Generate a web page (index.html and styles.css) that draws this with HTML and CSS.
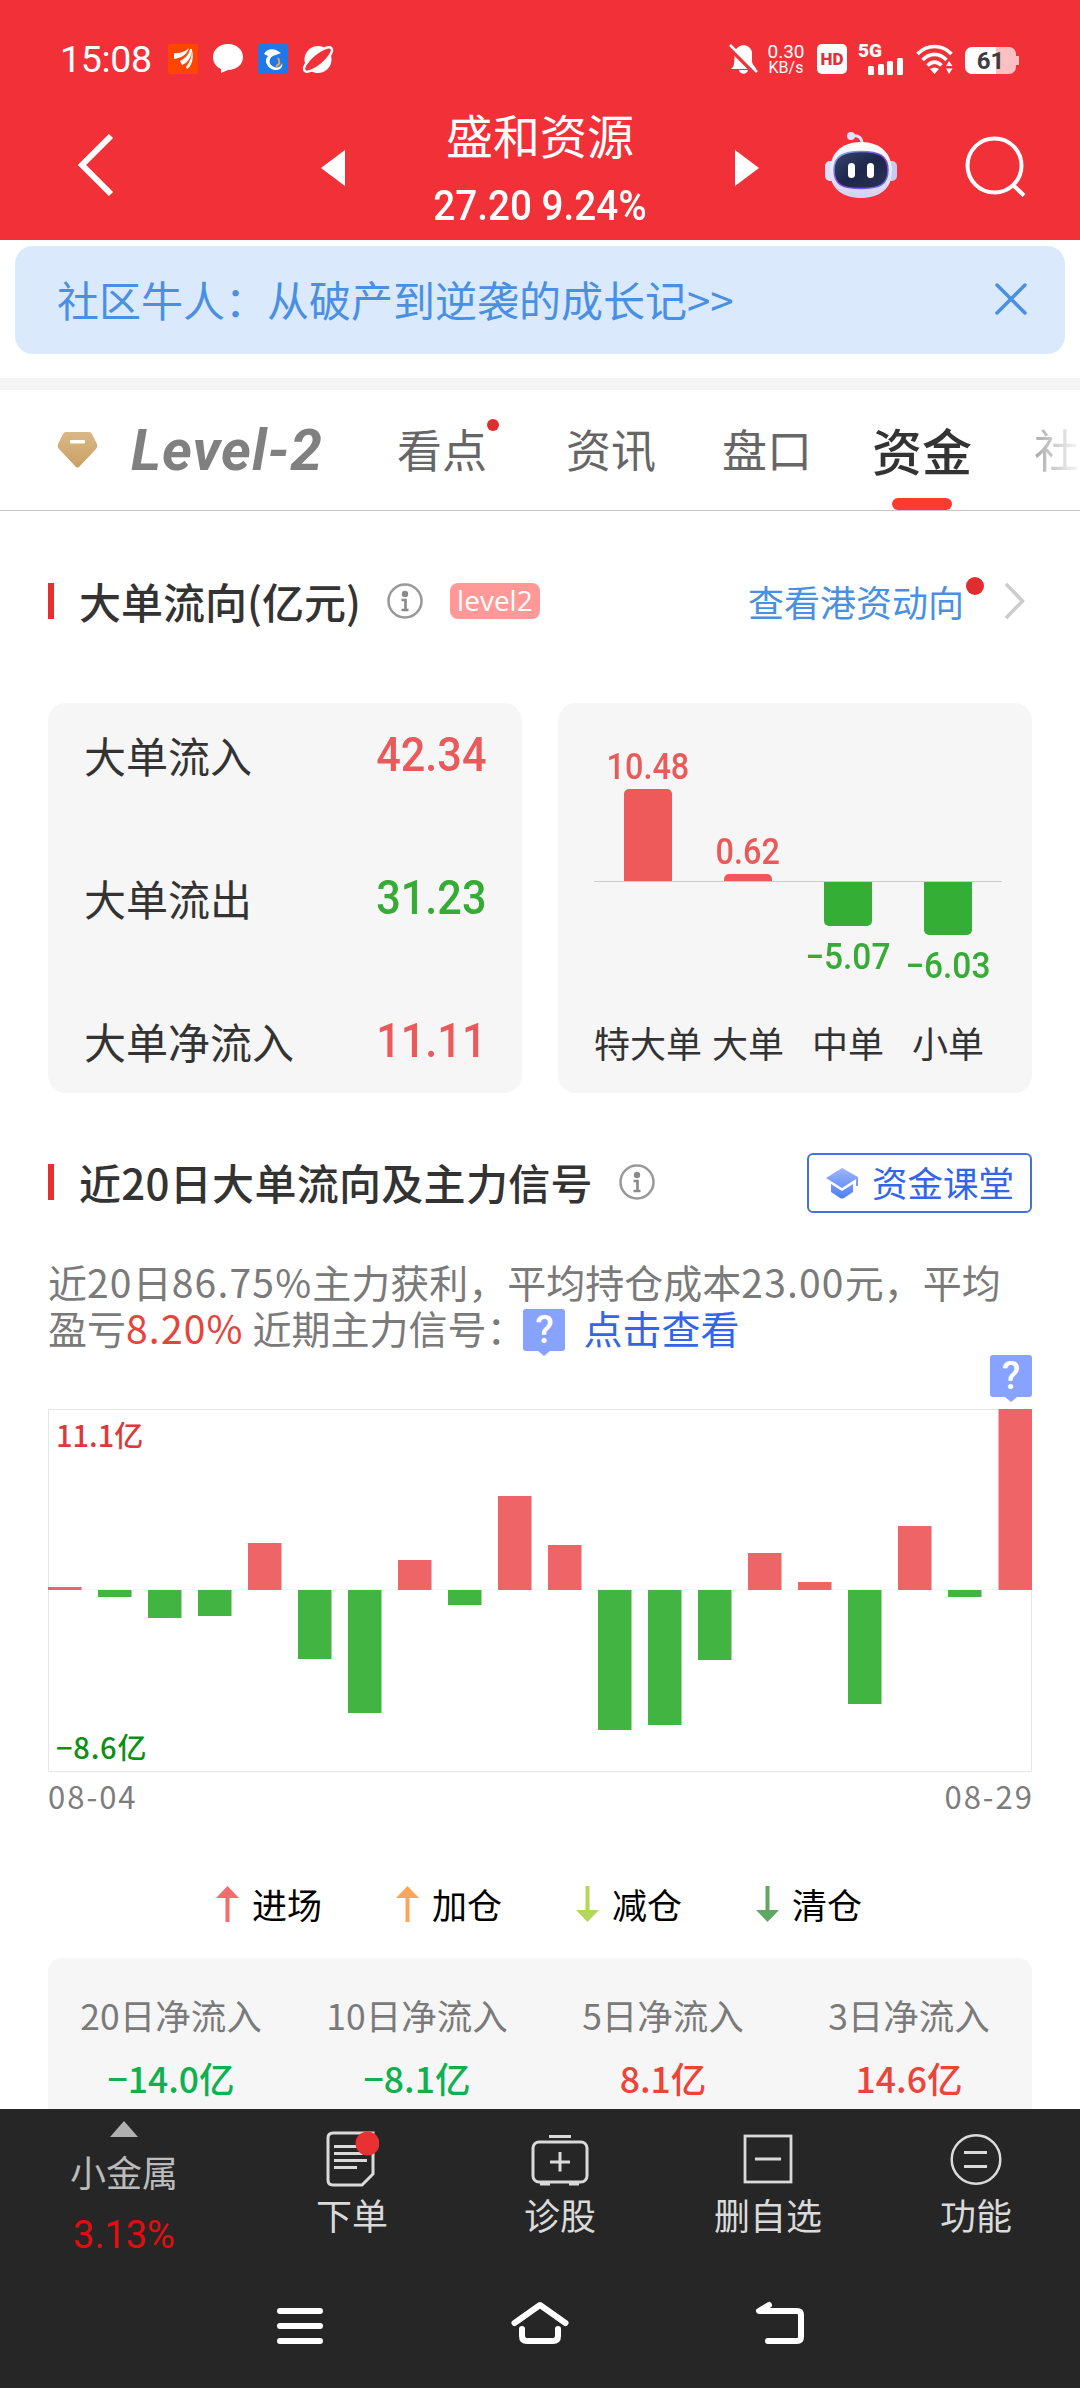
FILE: index.html
```
<!DOCTYPE html>
<html lang="zh-CN">
  <head>
    <meta charset="UTF-8">
    <meta name="viewport" content="width=device-width, initial-scale=1.0">
    <title>盛和资源</title>
    <link rel="stylesheet" href="styles.css">
  </head>
  <body>
    <header class="header">
      <div class="status">
        <span class="clock">15:08</span>
        <svg class="status-left" width="168" height="32" viewBox="0 0 168 32">
          <rect x="1" y="1" width="30" height="30" rx="2" fill="#ff4500"/>
          <path d="M7 10C13 11 19 8 22 5C20 12 14 15 7 16ZM13 18C19 15 22 11 23 6L25 6C25 13 21 20 15 22ZM19 24C23 19 25 13 25 7C27 15 25 23 20 26Z" fill="#fff"/>
          <path d="M61 1C70 1 76 7 76 14C76 22 69 27 61 27L54 30L54 26C49 24 46 19 46 14C46 7 52 1 61 1Z" fill="#fff"/>
          <rect x="91" y="1" width="30" height="30" rx="2" fill="#1f77e8"/>
          <path d="M97 11C99 7 104 5 109 7L114 10L109 12C103 13 101 18 104 22C108 26 114 25 115 20C117 27 108 29 103 25C98 21 98 16 101 13Z" fill="#fff"/>
          <path d="M109 23C113 22 113 18 111 15" stroke="#f6a33a" stroke-width="2" fill="none"/>
          <circle cx="151" cy="16.500" r="13.500" fill="#fff"/>
          <ellipse cx="151" cy="16.500" rx="17.500" ry="6" transform="rotate(-40 151 16.500)" fill="#f23038" stroke="#fff" stroke-width="2.500"/>
        </svg>
        <div class="status-right">
          <svg width="30" height="32" viewBox="0 0 30 32">
            <path d="M5 24C7 21 6 12 7 9C9 0 22 0 24 9L24 18C24 22 28 24 28 26L3 26ZM11 27H20C19 32 12 32 11 27Z" fill="#fff"/>
            <path d="M0 3L28 31" stroke="#f23038" stroke-width="5"/>
            <path d="M2 2L29 29" stroke="#fff" stroke-width="2.5"/>
          </svg>
          <div class="speed"><span>0.30</span><span class="unit">KB/s</span></div>
          <span class="hd">HD</span>
          <div class="signal">
            <span>5G</span>
            <svg width="36" height="17" viewBox="0 0 36 17">
              <g fill="#fff"><rect x="0" y="8" width="6" height="9" rx="1.5"/><rect x="10" y="6" width="6" height="11" rx="1.5"/><rect x="19" y="3" width="6" height="14" rx="1.5"/><rect x="29" y="0" width="6" height="17" rx="1.5"/></g>
            </svg>
          </div>
          <svg class="wifi" width="38" height="31" viewBox="0 0 38 31">
            <g fill="none" stroke="#fff" stroke-width="3.6"><path d="M1.500 10C11 0 26 0 35.500 10"/><path d="M6.500 16C14 8.500 23 8.500 30.500 16"/><path d="M11.500 21.500C16 17 21 17 25.500 21.500"/></g>
            <path d="M14 25Q18.500 22 23 25L18.500 30Z" fill="#fff"/>
            <path d="M30 22L33 17L36.500 22ZM30 24.500H36.500L33 30Z" fill="#fff"/>
          </svg>
          <div class="battery"><span>61</span></div>
        </div>
      </div>
      <div class="titlebar">
        <svg class="back" width="40" height="66" viewBox="0 0 40 66"><path d="M36 4L7 33L36 62" fill="none" stroke="#fff" stroke-width="6"/></svg>
        <svg class="prev" width="24" height="36" viewBox="0 0 24 36"><path d="M24 0V36L0 18Z" fill="#fff"/></svg>
        <div class="stock">
          <h1>盛和资源</h1>
          <span class="din">27.20 9.24%</span>
        </div>
        <svg class="next" width="24" height="36" viewBox="0 0 24 36"><path d="M0 0V36L24 18Z" fill="#fff"/></svg>
        <svg class="robot" width="72" height="68" viewBox="0 0 72 68">
          <defs>
            <linearGradient id="shell" x1="0" y1="0" x2="0" y2="1"><stop offset="0" stop-color="#fff"/><stop offset="1" stop-color="#d3d0f6"/></linearGradient>
            <linearGradient id="face" x1="0" y1="0" x2="1" y2="1"><stop offset="0" stop-color="#39456b"/><stop offset=".5" stop-color="#1d264b"/><stop offset="1" stop-color="#2b3153"/></linearGradient>
            <linearGradient id="rim" x1="0" y1="0" x2="1" y2="1"><stop offset="0" stop-color="#7bc4ef"/><stop offset=".5" stop-color="#7a3fd8"/><stop offset="1" stop-color="#6a6fe8"/></linearGradient>
          </defs>
          <path d="M27 5C34 4 37 7 37 13" fill="none" stroke="#e4e1f8" stroke-width="3"/>
          <circle cx="26" cy="5" r="4" fill="#e4e1f8"/>
          <rect x="0" y="30" width="12" height="20" rx="5" fill="#e0defa"/>
          <rect x="60" y="30" width="12" height="20" rx="5" fill="#c9c9f2"/>
          <path d="M36 11C56 11 67 23 67 40C67 58 54 67 36 67C18 67 5 58 5 40C5 23 16 11 36 11Z" fill="url(#shell)"/>
          <path d="M36 20.500C54 20.500 63 25 63 39C63 54 54 57.500 36 57.500C18 57.500 9 54 9 39C9 25 18 20.500 36 20.500Z" fill="url(#face)" stroke="url(#rim)" stroke-width="1.500"/>
          <rect x="23" y="32" width="7" height="15" rx="3.500" fill="#fff"/>
          <rect x="42" y="32" width="7" height="15" rx="3.500" fill="#fff"/>
        </svg>
        <svg class="search" width="62" height="62" viewBox="0 0 62 62"><g fill="none" stroke="#fff" stroke-width="4"><circle cx="29.500" cy="29.500" r="27"/><path d="M48 49L59 59.500"/></g></svg>
      </div>
    </header>

    <div class="banner">
      <span>社区牛人：从破产到逆袭的成长记&gt;&gt;</span>
      <svg width="32" height="32" viewBox="0 0 32 32"><path d="M2 2L30 30M30 2L2 30" stroke="#4a90e2" stroke-width="3.500" stroke-linecap="round"/></svg>
    </div>

    <nav class="tabs">
      <svg class="diamond" width="41" height="36" viewBox="0 0 41 36">
        <defs><linearGradient id="gold" x1="0" y1="0" x2="0" y2="1"><stop offset="0" stop-color="#d9b886"/><stop offset="1" stop-color="#caa066"/></linearGradient></defs>
        <path d="M9 0H32Q34 0 35 2L40 12Q41 15 39 17L22 35Q20.500 36 19 35L2 17Q0 15 1 12L6 2Q7 0 9 0Z" fill="url(#gold)"/>
        <rect x="13" y="8" width="15" height="3.500" rx="1" fill="#fff"/>
      </svg>
      <span class="level">Level-2</span>
      <a class="tab dot">看点</a>
      <a class="tab">资讯</a>
      <a class="tab">盘口</a>
      <a class="tab active">资金</a>
      <a class="tab fade">社</a>
    </nav>

    <main class="content">
      <section>
        <div class="heading">
          <h2>大单流向(亿元)</h2>
          <svg class="info" width="36" height="36" viewBox="0 0 36 36"><circle cx="18" cy="18" r="16.500" fill="none" stroke="#999" stroke-width="2.500"/><circle cx="18" cy="11" r="3.200" fill="#8a8a8a"/><path d="M14.500 17H18.500V27M14.500 27H21.500" fill="none" stroke="#8a8a8a" stroke-width="2.600"/></svg>
          <span class="badge">level2</span>
          <a class="hk-link">查看港资动向</a>
          <svg class="more" width="22" height="38" viewBox="0 0 22 38"><path d="M2 2L18.500 19L2 36" fill="none" stroke="#ccc" stroke-width="3.500"/></svg>
        </div>

        <div class="cards">
          <div class="card flow">
            <div class="row"><span>大单流入</span><b class="din up">42.34</b></div>
            <div class="row"><span>大单流出</span><b class="din down">31.23</b></div>
            <div class="row"><span>大单净流入</span><b class="din up">11.11</b></div>
          </div>
          <div class="card orders">
            <div class="zone above">
              <div class="order"><b class="din up">10.48</b><i style="height:92px"></i></div>
              <div class="order"><b class="din up">0.62</b><i style="height:7px"></i></div>
            </div>
            <div class="zone below">
              <div class="order"></div>
              <div class="order"></div>
              <div class="order"><i style="height:44px"></i><b class="din down">−5.07</b></div>
              <div class="order"><i style="height:53px"></i><b class="din down">−6.03</b></div>
            </div>
            <div class="names"><span>特大单</span><span>大单</span><span>中单</span><span>小单</span></div>
          </div>
        </div>
      </section>

      <section class="signal20">
        <div class="heading">
          <h2>近20日大单流向及主力信号</h2>
          <svg class="info" width="36" height="36" viewBox="0 0 36 36"><circle cx="18" cy="18" r="16.500" fill="none" stroke="#999" stroke-width="2.500"/><circle cx="18" cy="11" r="3.200" fill="#8a8a8a"/><path d="M14.500 17H18.500V27M14.500 27H21.500" fill="none" stroke="#8a8a8a" stroke-width="2.600"/></svg>
          <a class="lesson">
            <svg width="34" height="32" viewBox="0 0 34 32">
              <defs><linearGradient id="cap" x1="0" y1="0" x2="0" y2="1"><stop offset="0" stop-color="#9db6fc"/><stop offset="1" stop-color="#4f7ef8"/></linearGradient></defs>
              <path d="M17 1L33 10V19H31V12L17 21L1 11ZM6 17L17 24L28 17V25L19 31Q17 32 15 31L6 25Z" fill="url(#cap)"/>
            </svg>
            <span>资金课堂</span>
          </a>
        </div>

        <p class="summary">近<span class="num">20</span>日<span class="num">86.75%</span>主力获利，平均持仓成本<span class="num">23.00</span>元，平均<br>盈亏<em class="num">8.20%</em> 近期主力信号：<span class="mark">?</span><a>点击查看</a></p>

        <div class="chart">
          <span class="mark last">?</span>
          <span class="max">11.1亿</span>
          <span class="min">−8.6亿</span>
          <svg width="984" height="363" viewBox="0 0 984 363">
            <rect x=".5" y=".5" width="983" height="362" fill="none" stroke="#e6e6e6"/>
            <path d="M0 180.500H984" stroke="#f6f6f6"/>
            <g fill="#ef6567">
              <rect x="0" y="178" width="33.500" height="3"/>
              <rect x="200" y="134" width="33.500" height="47"/>
              <rect x="350" y="151" width="33.500" height="30"/>
              <rect x="450" y="87" width="33.500" height="94"/>
              <rect x="500" y="136" width="33.500" height="45"/>
              <rect x="700" y="144" width="33.500" height="37"/>
              <rect x="750" y="173" width="33.500" height="8"/>
              <rect x="850" y="117" width="33.500" height="64"/>
              <rect x="950.500" y="0" width="33.500" height="181"/>
            </g>
            <g fill="#42b442">
              <rect x="50" y="181" width="33.500" height="7"/>
              <rect x="100" y="181" width="33.500" height="28"/>
              <rect x="150" y="181" width="33.500" height="26"/>
              <rect x="250" y="181" width="33.500" height="69"/>
              <rect x="300" y="181" width="33.500" height="123"/>
              <rect x="400" y="181" width="33.500" height="15"/>
              <rect x="550" y="181" width="33.500" height="140"/>
              <rect x="600" y="181" width="33.500" height="135"/>
              <rect x="650" y="181" width="33.500" height="70"/>
              <rect x="800" y="181" width="33.500" height="114"/>
              <rect x="900" y="181" width="33.500" height="7"/>
            </g>
          </svg>
        </div>
        <div class="dates"><span>08-04</span><span>08-29</span></div>

        <div class="legend">
          <span><svg width="23" height="36" viewBox="0 0 23 36"><path d="M11.500 0L23 12H13.500V36H9.500V12H0Z" fill="#f26d6c"/></svg>进场</span>
          <span><svg width="23" height="36" viewBox="0 0 23 36"><path d="M11.500 0L23 12H13.500V36H9.500V12H0Z" fill="#fba55c"/></svg>加仓</span>
          <span><svg width="23" height="36" viewBox="0 0 23 36"><path d="M11.500 36L23 24H13.500V0H9.500V24H0Z" fill="#b2d75c"/></svg>减仓</span>
          <span><svg width="23" height="36" viewBox="0 0 23 36"><path d="M11.500 36L23 24H13.500V0H9.500V24H0Z" fill="#5fa862"/></svg>清仓</span>
        </div>

        <div class="totals">
          <div><span>20日净流入</span><b class="out">−14.0亿</b></div>
          <div><span>10日净流入</span><b class="out">−8.1亿</b></div>
          <div><span>5日净流入</span><b class="in">8.1亿</b></div>
          <div><span>3日净流入</span><b class="in">14.6亿</b></div>
        </div>
      </section>
    </main>

    <footer class="footer">
      <div class="menu">
        <a class="sector">
          <svg width="28" height="16" viewBox="0 0 28 16"><path d="M14 0L28 16H0Z" fill="#b0b0b0"/></svg>
          <span>小金属</span>
          <b>3.13%</b>
        </a>
        <a class="item">
          <svg width="54" height="60" viewBox="0 0 54 60">
            <path d="M8 4H48V45L37 56H8Q3 56 3 51V9Q3 4 8 4Z" fill="none" stroke="#dadada" stroke-width="3"/>
            <path d="M9 17.500H35M9 24.500H38M9 31.500H42M9 38.500H32" stroke="#dadada" stroke-width="3"/>
            <circle cx="42.500" cy="14.500" r="12" fill="#e93134"/>
          </svg>
          <span>下单</span>
        </a>
        <a class="item">
          <svg width="60" height="60" viewBox="0 0 60 60">
            <rect x="3" y="13" width="54" height="40" rx="6" fill="none" stroke="#dadada" stroke-width="3"/>
            <path d="M19 7.500H41M30 23V42.500M20 33H40" stroke="#dadada" stroke-width="3"/>
            <path d="M10 54.500H20M39 54.500H49" stroke="#dadada" stroke-width="4"/>
          </svg>
          <span>诊股</span>
        </a>
        <a class="item">
          <svg width="50" height="60" viewBox="0 0 50 60">
            <rect x="2" y="7" width="46" height="46" fill="none" stroke="#dadada" stroke-width="2.800"/>
            <path d="M12 30H38" stroke="#dadada" stroke-width="3"/>
          </svg>
          <span>删自选</span>
        </a>
        <a class="item">
          <svg width="52" height="60" viewBox="0 0 52 60">
            <circle cx="26" cy="30.500" r="24.300" fill="none" stroke="#dadada" stroke-width="2.500"/>
            <path d="M14 23.500H37M14 37.500H37" stroke="#dadada" stroke-width="3"/>
          </svg>
          <span>功能</span>
        </a>
      </div>
      <div class="system">
        <svg width="60" height="46" viewBox="0 0 60 46"><path d="M10 10H50M10 25H50M10 40H50" stroke="#fff" stroke-width="6" stroke-linecap="round"/></svg>
        <svg width="60" height="46" viewBox="0 0 60 46"><path d="M4.500 22L30 4L55.500 22M12 28V35Q12 40 17 40H43Q48 40 48 35V28" fill="none" stroke="#fff" stroke-width="6" stroke-linecap="round" stroke-linejoin="round"/></svg>
        <svg width="60" height="46" viewBox="0 0 60 46"><path d="M19 4L9 10H47Q51 10 51 14V36Q51 40 47 40H18" fill="none" stroke="#fff" stroke-width="6" stroke-linecap="round" stroke-linejoin="round"/></svg>
      </div>
    </footer>
  </body>
</html>
```
FILE: styles.css
```
* {
  box-sizing: border-box;
}
body {
  margin: 0;
  width: 1080px;
  height: 2388px;
  overflow: hidden;
  display: flex;
  flex-direction: column;
  background: #fff;
  color: #333;
  font-family: "Noto Sans CJK SC", sans-serif;
}
svg {
  display: block;
  flex: none;
}
h1, h2, p {
  margin: 0;
}
b, em, i {
  font-style: normal;
  font-weight: 500;
}

/* narrow figures */
.din {
  display: inline-block;
  font-family: Roboto, sans-serif;
  font-weight: 500;
  white-space: nowrap;
  transform: scaleX(.9);
}
.up {
  color: #eb5a5a;
}
.down {
  color: #36ab36;
}

/* header */
.header {
  flex: none;
  height: 240px;
  background: #f23038;
  color: #fff;
}
.status {
  height: 118px;
  padding-left: 60px;
  display: flex;
  align-items: center;
}
.clock {
  width: 107px;
  font: 37.500px/40px Roboto, sans-serif;
  letter-spacing: -.3px;
}
.status-right {
  flex: 1;
  display: flex;
  align-items: center;
  padding-left: 393px;
}
.speed {
  width: 38px;
  margin-left: 9px;
  font: 19px/17px Roboto, sans-serif;
  text-align: center;
}
.speed span {
  display: block;
}
.speed .unit {
  font-size: 16px;
  line-height: 15px;
}
.hd {
  width: 30px;
  height: 30px;
  margin-left: 12px;
  border-radius: 5px;
  background: #fff;
  color: #d8353b;
  font: 900 17px/31px Roboto, sans-serif;
  text-align: center;
}
.signal {
  width: 46px;
  margin-left: 11px;
  font: 900 19px/14px Roboto, sans-serif;
}
.signal span {
  display: block;
}
.signal svg {
  margin-left: 10px;
}
.wifi {
  margin-left: 12px;
}
.battery {
  position: relative;
  width: 51px;
  height: 27px;
  margin: 3px 0 0 11px;
  border-radius: 7px;
  background: linear-gradient(90deg, #fff 61%, #fcc0c3 61%);
  color: #3d3d3d;
  font: 700 24px/28px Roboto, sans-serif;
  text-align: center;
}
.battery::after {
  content: "";
  position: absolute;
  left: 51px;
  top: 9px;
  width: 3px;
  height: 9px;
  background: #fcc0c3;
}
.titlebar {
  height: 122px;
  display: flex;
  align-items: flex-start;
}
.back {
  margin: 14px 0 0 75px;
}
.prev {
  margin: 32px 0 0 206px;
}
.stock {
  width: 390px;
  text-align: center;
}
.stock h1 {
  font-size: 47px;
  font-weight: 400;
  line-height: 56px;
  margin-top: -12px;
}
.stock .din {
  display: block;
  font-size: 42.500px;
  line-height: 50px;
  margin-top: 19px;
  transform: scaleX(.91);
}
.next {
  margin-top: 32px;
}
.robot {
  margin: 13px 0 0 66px;
}
.search {
  margin: 18px 0 0 68px;
}

/* banner */
.banner {
  flex: none;
  height: 108px;
  margin: 6px 15px 24px;
  padding: 0 38px 2px 42px;
  display: flex;
  align-items: center;
  justify-content: space-between;
  border-radius: 18px;
  background: #dae9fc;
  color: #4a90e2;
  font-size: 42px;
  line-height: 60px;
}

/* tabs */
.tabs {
  flex: none;
  height: 133px;
  border-top: 12px solid #f4f4f4;
  border-bottom: 1px solid #c6c6c6;
  display: flex;
  overflow: hidden;
}
.diamond {
  margin: 42px 0 0 57px;
}
.level {
  flex: none;
  width: 264px;
  margin-left: 33px;
  color: #808080;
  font: italic 700 57px/121px Roboto, sans-serif;
  letter-spacing: 1px;
}
.tab {
  position: relative;
  flex: none;
  width: 162px;
  color: #666;
  font-size: 45px;
  line-height: 118px;
}
.tab:nth-of-type(2) {
  width: 156px;
}
.tab:nth-of-type(3) {
  width: 150px;
}
.tab.dot {
  margin-left: 2px;
  width: 169px;
}
.tab.dot::after {
  content: "";
  position: absolute;
  left: 90px;
  top: 29px;
  width: 12px;
  height: 12px;
  border-radius: 50%;
  background: #e02d2f;
}
.tab.active {
  color: #333;
  font-size: 50px;
  font-weight: 500;
}
.tab.active::after {
  content: "";
  position: absolute;
  left: 20px;
  bottom: 0;
  width: 60px;
  height: 12px;
  border-radius: 6px;
  background: #fb3b32;
}
.tab.fade {
  width: 46px;
  color: transparent;
  background: linear-gradient(90deg, #aaa, #f6f6f6 44px);
  -webkit-background-clip: text;
  background-clip: text;
}

/* sections */
.content {
  flex: 1;
  min-height: 0;
  overflow: hidden;
  padding: 61px 48px 0;
}
.heading {
  height: 60px;
  display: flex;
  align-items: center;
}
.heading::before {
  content: "";
  width: 6px;
  height: 36px;
  background: #e62f30;
}
.heading h2 {
  margin: -3px 0 0 25px;
  font-size: 42px;
  font-weight: 500;
  line-height: 60px;
  white-space: nowrap;
}
.info {
  margin: -3px 0 0 26px;
}
.badge {
  width: 90px;
  height: 36px;
  margin: -3px 0 0 27px;
  border-radius: 8px;
  background: #ff9896;
  color: #fff;
  font: 28px/35px "Open Sans", sans-serif;
  text-align: center;
}
.heading::before, .more {
  margin-top: -3px;
}
.hk-link {
  position: relative;
  margin: -3px 0 0 auto;
  color: #4a90e2;
  font-size: 36px;
}
.hk-link::after {
  content: "";
  position: absolute;
  right: -20px;
  top: 2px;
  width: 18px;
  height: 18px;
  border-radius: 50%;
  background: #e02d2f;
}
.more {
  margin-left: 40px;
  margin-right: 6px;
}
.cards {
  display: grid;
  grid-template-columns: 474px 474px;
  gap: 36px;
  margin-top: 71px;
}
.card {
  height: 390px;
  border-radius: 18px;
  background: #f6f6f6;
}
.flow {
  padding: 22px 36px;
  display: flex;
  flex-direction: column;
  justify-content: space-between;
}
.row {
  display: flex;
  justify-content: space-between;
  font-size: 42px;
  line-height: 60px;
}
.row .din {
  font-size: 48px;
  transform-origin: right;
}
.orders {
  padding: 0 30px 0 36px;
}
.zone {
  height: 178px;
  display: flex;
  align-items: flex-end;
  padding-left: 4px;
}
.below {
  height: 140px;
  align-items: flex-start;
  border-top: 1px solid #ccc;
}
.order {
  width: 100px;
  display: flex;
  flex-direction: column;
  align-items: center;
}
.order .din {
  font-size: 36px;
  line-height: 38px;
  margin: 3px 0;
}
.order i {
  width: 48px;
  border-radius: 5px 5px 0 0;
  background: #ee595a;
}
.below i {
  border-radius: 0 0 5px 5px;
  background: #35ae35;
}
.below .din {
  margin-top: 12px;
  transform: scaleX(.93);
}
.names {
  display: grid;
  grid-template-columns: repeat(4, 100px);
  justify-items: center;
  padding-left: 4px;
  font-size: 36px;
  line-height: 42px;
  white-space: nowrap;
}

.signal20 .heading {
  margin-top: 60px;
}
.signal20 h2 {
  letter-spacing: .3px;
}
.lesson {
  width: 225px;
  height: 60px;
  margin-left: auto;
  padding-left: 16px;
  display: flex;
  align-items: center;
  gap: 13px;
  border: 2px solid #4372de;
  border-radius: 6px;
  color: #3465e8;
  font-size: 35.500px;
}
.lesson span {
  margin-top: -4px;
}
.summary {
  height: 92px;
  margin-top: 45px;
  color: #7a7a7a;
  font-size: 39px;
  line-height: 46px;
  white-space: nowrap;
}
.summary em {
  color: #e8433a;
  font-weight: 400;
}
.summary a {
  color: #3465e8;
}
.num {
  letter-spacing: 1.200px;
}
.mark {
  position: relative;
  display: inline-block;
  width: 42px;
  height: 42px;
  margin: 0 18px 0 -2px;
  border-radius: 3px;
  background: #87a2ff;
  color: #fff;
  font: 500 38px/42px Roboto, sans-serif;
  text-align: center;
  vertical-align: 1px;
}
.mark::after {
  content: "";
  position: absolute;
  left: 15px;
  top: 42px;
  border: 6px solid transparent;
  border-top: 5px solid #87a2ff;
  border-bottom: 0;
}
.chart {
  position: relative;
  height: 363px;
  margin-top: 59px;
}
.mark.last {
  position: absolute;
  right: 0;
  top: -54px;
  margin: 0;
}
.max, .min {
  position: absolute;
  left: 8px;
  top: 10px;
  color: #d93a3a;
  font-size: 29px;
  font-weight: 500;
  line-height: 30px;
}
.min {
  top: auto;
  left: 8px;
  bottom: 11px;
  color: #0c8f12;
  letter-spacing: .8px;
}
.dates {
  display: flex;
  justify-content: space-between;
  margin-top: 4px;
  margin-right: -2px;
  color: #7d7d7d;
  font-size: 31px;
  line-height: 40px;
  letter-spacing: 2px;
}
.legend {
  display: grid;
  grid-template-columns: repeat(4, 180px);
  margin: 66px 0 0 168px;
  color: #000;
  font-size: 35px;
  line-height: 44px;
}
.legend span {
  display: flex;
  align-items: center;
  gap: 13px;
}
.totals {
  height: 200px;
  margin-top: 32px;
  padding-top: 32px;
  display: grid;
  grid-template-columns: repeat(4, 1fr);
  border-radius: 14px;
  background: #f6f6f6;
  text-align: center;
}
.totals span, .totals b {
  display: block;
  color: #7a7a7a;
  font-size: 35.500px;
  line-height: 50px;
}
.totals b {
  margin-top: 13px;
  font-weight: 500;
}
.totals .out {
  color: #0eb050;
}
.totals .in {
  color: #ee4338;
}

/* footer */
.footer {
  flex: none;
  height: 279px;
  background: #262626;
  color: #dadada;
  font-size: 36px;
}
.menu {
  height: 180px;
  display: grid;
  grid-template-columns: 248px repeat(4, 208px);
}
.menu a {
  display: flex;
  flex-direction: column;
  align-items: center;
}
.sector {
  padding-top: 12px;
  color: #bbb;
}
.sector span {
  line-height: 50px;
  margin-top: 9px;
}
.sector b {
  margin-top: 17px;
  color: #e00f0f;
  font: 38px/44px Roboto, sans-serif;
}
.item {
  padding-top: 20px;
}
.item span {
  line-height: 50px;
}
.system {
  display: grid;
  grid-template-columns: repeat(3, 240px);
  justify-content: center;
  justify-items: center;
  padding-top: 12px;
}
```
